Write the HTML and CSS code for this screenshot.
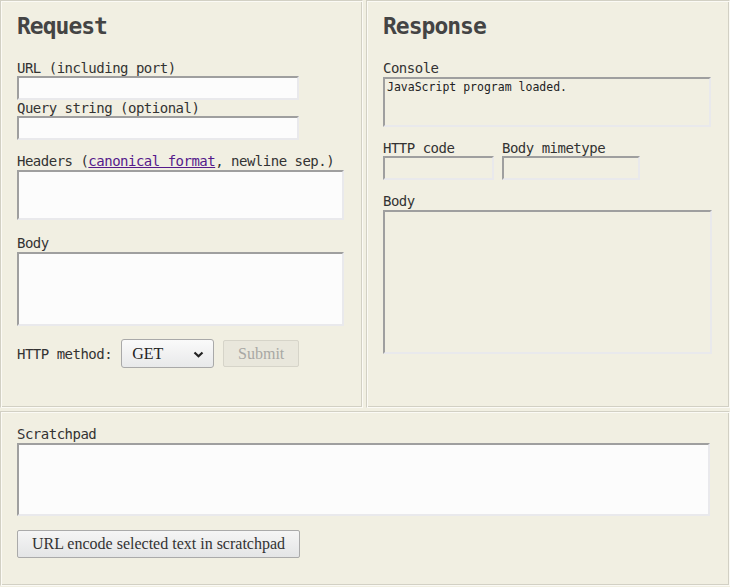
FILE: index.html
```html
<!DOCTYPE html>
<html lang="en">
<head>
<meta charset="utf-8">
<title>HTTP request tester</title>
<link rel="stylesheet" href="styles.css">
</head>
<body>
<div class="page">
  <section class="panel">
    <h2 class="title">Request</h2>
    <label class="label first" for="url">URL (including port)</label>
    <input class="field url" id="url" type="text">
    <label class="label" for="qs">Query string (optional)</label>
    <input class="field url" id="qs" type="text">
    <label class="label gap" for="headers">Headers (<a class="link" href="#">canonical format</a>, newline sep.)</label>
    <textarea class="area headers" id="headers"></textarea>
    <label class="label gap2" for="body">Body</label>
    <textarea class="area req-body" id="body"></textarea>
    <div class="method-row">
      <span class="method-label">HTTP method:</span>
      <span class="select-wrap">
        <select class="select"><option>GET</option><option>POST</option></select>
        <svg class="chev" width="11" height="7" viewBox="0 0 11 7"><path d="M1.5 1.5 L5.5 5.2 L9.5 1.5" fill="none" stroke="#222" stroke-width="2.2"/></svg>
      </span>
      <button class="submit" disabled>Submit</button>
    </div>
  </section>
  <section class="panel">
    <h2 class="title">Response</h2>
    <label class="label first" for="console">Console</label>
    <textarea class="area ro console" id="console" readonly>JavaScript program loaded.</textarea>
    <div class="pair">
      <div class="pair-col">
        <label class="label" for="code">HTTP code</label>
        <input class="field ro code" id="code" type="text" readonly>
      </div>
      <div class="pair-col">
        <label class="label" for="mime">Body mimetype</label>
        <input class="field ro mime" id="mime" type="text" readonly>
      </div>
    </div>
    <label class="label gap" for="rbody">Body</label>
    <textarea class="area ro resp-body" id="rbody" readonly></textarea>
  </section>
  <section class="panel panel-wide">
    <label class="label" for="scratch">Scratchpad</label>
    <textarea class="area scratch" id="scratch"></textarea>
    <button class="encode">URL encode selected text in scratchpad</button>
  </section>
</div>
</body>
</html>
```
FILE: styles.css
```css
* { box-sizing: border-box; }
html, body { margin: 0; padding: 0; }
body {
  background: #f1efe2;
  color: #333;
  font-family: "DejaVu Sans Mono", "Liberation Mono", monospace;
  font-size: 14px;
  letter-spacing: -0.5px;
}
.page {
  display: grid;
  grid-template-columns: 363px 1fr;
  column-gap: 3px;
  row-gap: 3px;
  width: 730px;
}
.panel {
  border: 1px solid;
  border-color: #d2d0c4 #fbfaf5 #fbfaf5 #d2d0c4;
  box-shadow: inset 1px 1px 0 #fbfaf5, inset -1px -1px 0 #d2d0c4;
  padding: 11px 16px 39px;
  min-width: 0;
}
.panel-wide {
  grid-column: 1 / -1;
  padding: 14px 16px 27px;
}
.title {
  margin: 0;
  font-size: 23px;
  line-height: 28px;
  font-weight: bold;
  letter-spacing: -1px;
  color: #444;
}
.label { display: block; line-height: 16px; }
.first { margin-top: 20px; }
.gap { margin-top: 13px; }
.gap2 { margin-top: 15px; }
.link { color: #551a8b; text-decoration: underline; }
.field, .area {
  display: block;
  border-style: solid;
  border-width: 2px;
  border-color: #9f9f9f #e9e9ec #e9e9ec #9f9f9f;
  background: #fcfcfc;
  margin: 0;
  padding: 1px 2px;
  font-family: "DejaVu Sans Mono", monospace;
  font-size: 11.5px;
  letter-spacing: 0;
  color: #222;
  resize: none;
  outline: none;
}
.field { height: 24px; }
.url { width: 282px; }
.area { margin-top: 1px; }
.headers { width: 327px; height: 50px; }
.req-body { width: 327px; height: 74px; }
.ro { background: #f1efe2; }
.console { width: 328px; height: 50px; }
.pair { display: flex; gap: 8px; margin-top: 13px; }
.code { width: 111px; }
.mime { width: 138px; }
.resp-body { width: 329px; height: 144px; }
.scratch { width: 693px; height: 73px; }
.method-row {
  display: flex;
  align-items: center;
  margin-top: 13px;
  height: 29px;
}
.method-label { margin-right: 9px; }
.select-wrap { position: relative; display: block; margin-right: 9px; }
.select {
  display: block;
  appearance: none;
  -webkit-appearance: none;
  width: 93px;
  height: 29px;
  border: 1px solid #a9a9a9;
  border-radius: 3px;
  background: linear-gradient(#fafafa, #e8e9ea);
  font-family: "Liberation Serif", serif;
  font-size: 16px;
  letter-spacing: 0;
  color: #222;
  padding: 0 0 0 10px;
  margin: 0;
}
.chev { position: absolute; right: 10px; top: 12px; pointer-events: none; }
.submit {
  width: 76px;
  height: 27px;
  border: 1px solid #d6d4c9;
  border-radius: 2px;
  background: #e9e7dc;
  color: #a8a8a4;
  font-family: "Liberation Serif", serif;
  font-size: 16px;
  letter-spacing: 0;
  padding: 0;
  margin: 0;
}
.encode {
  display: block;
  margin-top: 14px;
  width: 283px;
  height: 28px;
  border: 1px solid #aaa;
  border-radius: 2px;
  background: linear-gradient(#f5f5f5, #e4e5e6);
  color: #333;
  font-family: "Liberation Serif", serif;
  font-size: 16px;
  letter-spacing: 0;
  padding: 0;
}
```
